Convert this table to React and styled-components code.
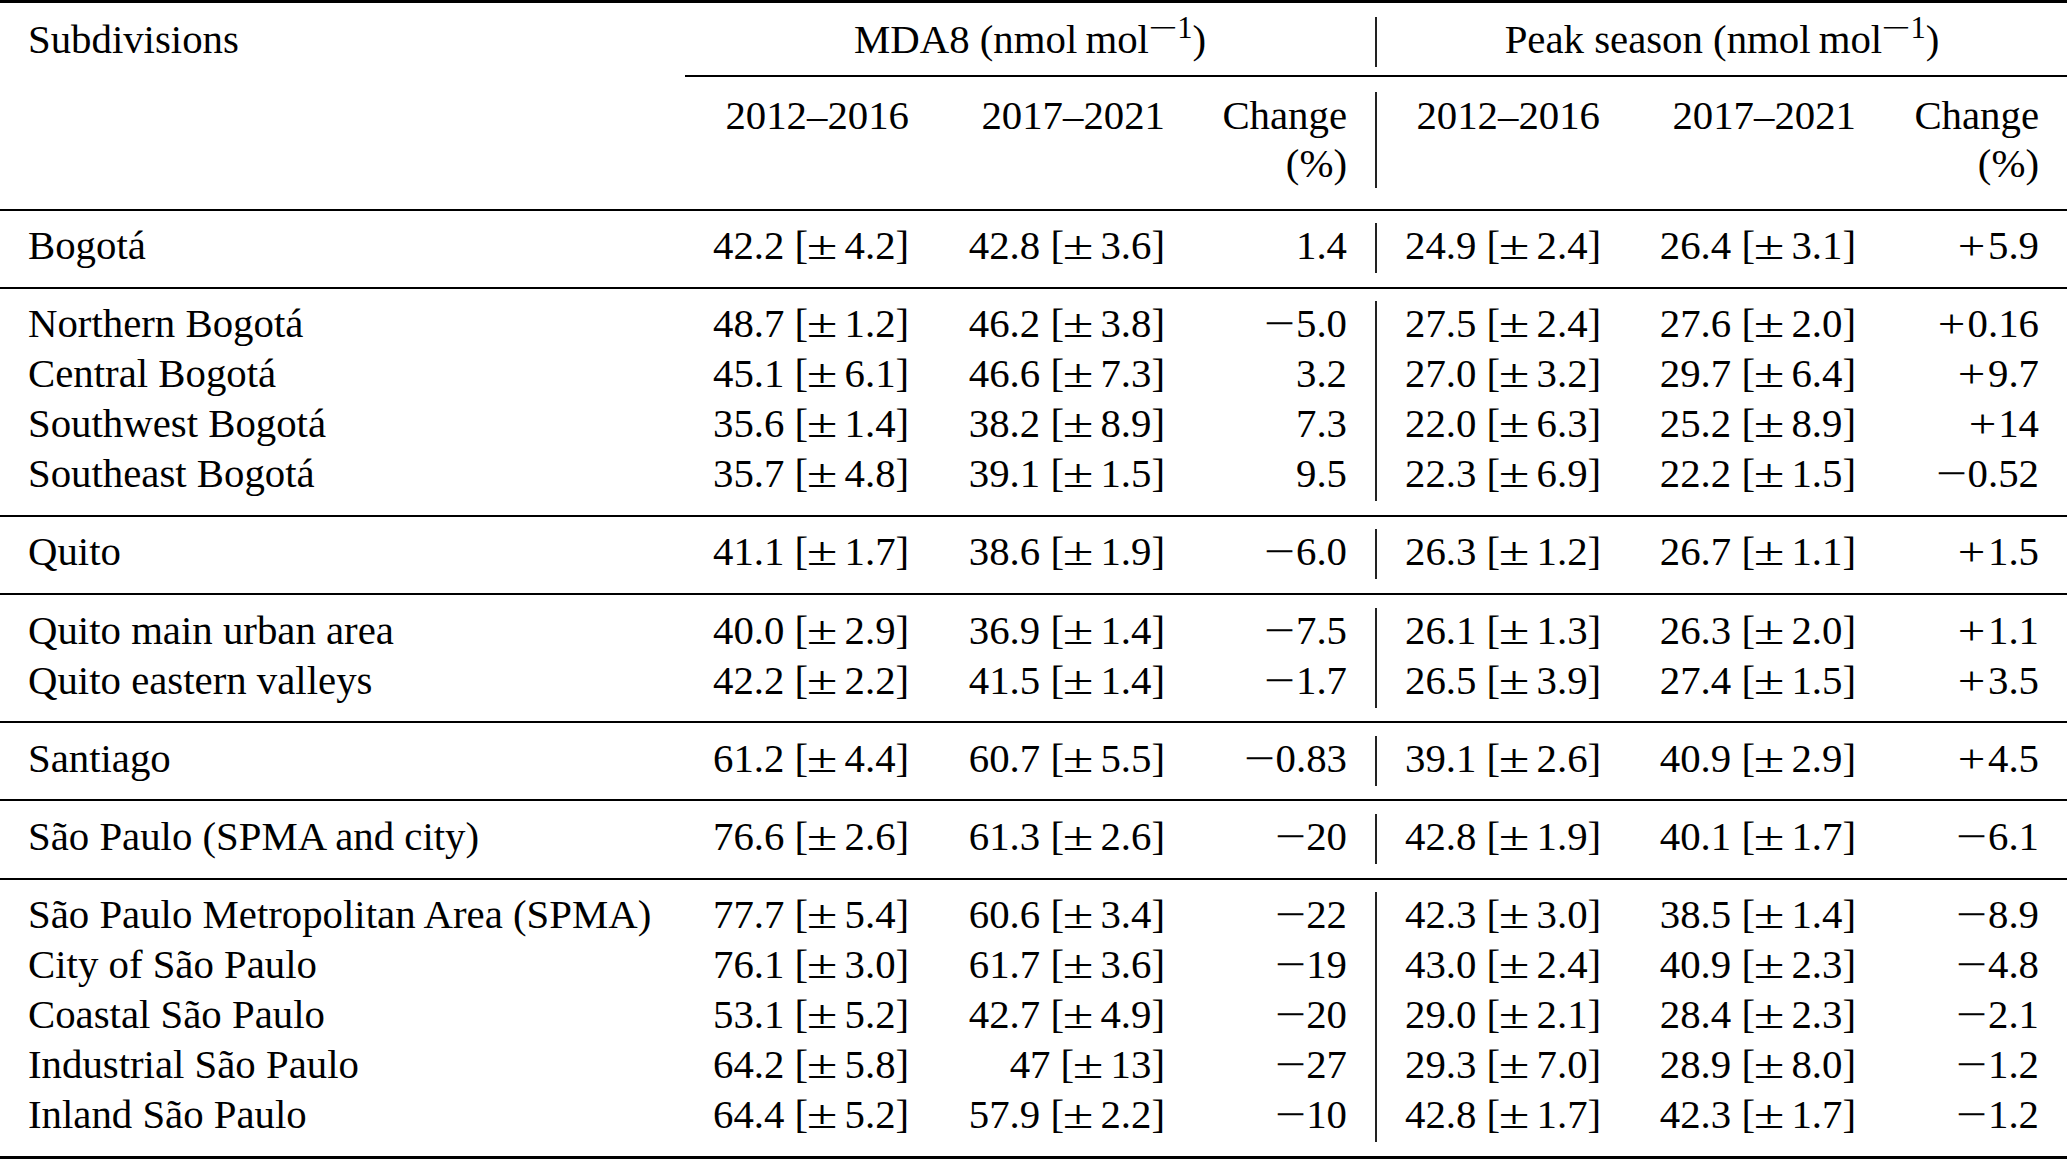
import React from 'react'
import styled, { createGlobalStyle, css } from 'styled-components'

const GlobalStyle = createGlobalStyle`
  html, body {
    margin: 0;
    padding: 0;
    background: #fff;
    overflow: hidden;
  }
  body {
    font-family: "Liberation Serif", "Times New Roman", serif;
    color: #000;
  }
`

const Table = styled.table`
  width: 2067px;
  table-layout: fixed;
  border-collapse: separate;
  border-spacing: 0;
  font-size: 40.8px;
`

const Col = styled.col`
  width: ${(p) => p.$w}px;
`

const RuleCell = styled.td`
  padding: ${(p) => p.$above}px 0 ${(p) => p.$below}px;
  line-height: 0;
`

const Line = styled.div`
  height: ${(p) => p.$weight}px;
  background: #000;
`

const cellBase = css`
  padding: 0 28px 5px;
  line-height: 45px;
  vertical-align: top;
  white-space: nowrap;
  font-weight: normal;
  text-align: ${(p) => p.$align || 'right'};
  border-left: ${(p) => (p.$divider ? '2px solid #222' : 'none')};
`

const Cell = styled.td`
  ${cellBase}
`

const HeadCell = styled.th`
  ${cellBase}
`

const SubHeadCell = styled.th`
  ${cellBase}
  padding-bottom: 0;
  line-height: 48px;
`

const Sup = styled.span`
  font-size: 0.75em;
  line-height: 0;
  vertical-align: 0.49em;
`

// math-style glyphs (± + −) are wider than the text font's own
const MathGlyph = styled.span`
  display: inline-block;
  transform: scaleX(${(p) => p.$sx});
  margin: 0 ${(p) => p.$right}px 0 ${(p) => p.$left}px;
`

const widths = [685, 252, 256, 182, 253, 256, 183]

const groups = [
  [['Bogotá', '42.2', '4.2', '42.8', '3.6', '1.4', '24.9', '2.4', '26.4', '3.1', '+5.9']],
  [
    ['Northern Bogotá', '48.7', '1.2', '46.2', '3.8', '−5.0', '27.5', '2.4', '27.6', '2.0', '+0.16'],
    ['Central Bogotá', '45.1', '6.1', '46.6', '7.3', '3.2', '27.0', '3.2', '29.7', '6.4', '+9.7'],
    ['Southwest Bogotá', '35.6', '1.4', '38.2', '8.9', '7.3', '22.0', '6.3', '25.2', '8.9', '+14'],
    ['Southeast Bogotá', '35.7', '4.8', '39.1', '1.5', '9.5', '22.3', '6.9', '22.2', '1.5', '−0.52']
  ],
  [['Quito', '41.1', '1.7', '38.6', '1.9', '−6.0', '26.3', '1.2', '26.7', '1.1', '+1.5']],
  [
    ['Quito main urban area', '40.0', '2.9', '36.9', '1.4', '−7.5', '26.1', '1.3', '26.3', '2.0', '+1.1'],
    ['Quito eastern valleys', '42.2', '2.2', '41.5', '1.4', '−1.7', '26.5', '3.9', '27.4', '1.5', '+3.5']
  ],
  [['Santiago', '61.2', '4.4', '60.7', '5.5', '−0.83', '39.1', '2.6', '40.9', '2.9', '+4.5']],
  [['São Paulo (SPMA and city)', '76.6', '2.6', '61.3', '2.6', '−20', '42.8', '1.9', '40.1', '1.7', '−6.1']],
  [
    ['São Paulo Metropolitan Area (SPMA)', '77.7', '5.4', '60.6', '3.4', '−22', '42.3', '3.0', '38.5', '1.4', '−8.9'],
    ['City of São Paulo', '76.1', '3.0', '61.7', '3.6', '−19', '43.0', '2.4', '40.9', '2.3', '−4.8'],
    ['Coastal São Paulo', '53.1', '5.2', '42.7', '4.9', '−20', '29.0', '2.1', '28.4', '2.3', '−2.1'],
    ['Industrial São Paulo', '64.2', '5.8', '47', '13', '−27', '29.3', '7.0', '28.9', '8.0', '−1.2'],
    ['Inland São Paulo', '64.4', '5.2', '57.9', '2.2', '−10', '42.8', '1.7', '42.3', '1.7', '−1.2']
  ]
]

const Rule = ({ above, below, weight }) => (
  <tr>
    <RuleCell colSpan={7} $above={above} $below={below}>
      <Line $weight={weight} />
    </RuleCell>
  </tr>
)

const Value = ({ v, e }) => (
  <>
    {v} [<MathGlyph $sx={1.37} $left={3} $right={11}>±</MathGlyph>{e}]
  </>
)

const Signed = ({ n }) => {
  const sign = n[0]
  if (sign === '−') {
    return (
      <>
        <MathGlyph $sx={1.35} $left={4} $right={4.5}>−</MathGlyph>
        {n.slice(1)}
      </>
    )
  }
  if (sign === '+') {
    return (
      <>
        <MathGlyph $sx={1.2} $left={4} $right={4.5}>+</MathGlyph>
        {n.slice(1)}
      </>
    )
  }
  return n
}

const Unit = () => (
  <>
    (nmol{'\u2009'}mol
    <Sup>
      <MathGlyph $sx={1.7} $left={5} $right={6}>−</MathGlyph>1
    </Sup>
    )
  </>
)

const DataRow = ({ row }) => {
  const [name, a, ae, b, be, c, d, de, f, fe, g] = row
  return (
    <tr>
      <Cell $align="left">{name}</Cell>
      <Cell><Value v={a} e={ae} /></Cell>
      <Cell><Value v={b} e={be} /></Cell>
      <Cell><Signed n={c} /></Cell>
      <Cell $divider><Value v={d} e={de} /></Cell>
      <Cell><Value v={f} e={fe} /></Cell>
      <Cell><Signed n={g} /></Cell>
    </tr>
  )
}

const App = () => {
  return (
    <>
      <GlobalStyle />
      <Table>
        <colgroup>
          {widths.map((w, i) => (
            <Col key={i} $w={w} />
          ))}
        </colgroup>
        <thead>
          <Rule above={0} below={14} weight={3} />
          <tr>
            <HeadCell $align="left">Subdivisions</HeadCell>
            <HeadCell colSpan={3} $align="center">
              MDA8 <Unit />
            </HeadCell>
            <HeadCell colSpan={3} $align="center" $divider>
              Peak season <Unit />
            </HeadCell>
          </tr>
          <tr>
            <RuleCell $above={8} $below={15.5} />
            <RuleCell colSpan={6} $above={8} $below={15.5}>
              <Line $weight={1.5} />
            </RuleCell>
          </tr>
          <tr>
            <SubHeadCell $align="left" />
            <SubHeadCell>2012–2016</SubHeadCell>
            <SubHeadCell>2017–2021</SubHeadCell>
            <SubHeadCell>
              Change
              <br />
              (%)
            </SubHeadCell>
            <SubHeadCell $divider>2012–2016</SubHeadCell>
            <SubHeadCell>2017–2021</SubHeadCell>
            <SubHeadCell>
              Change
              <br />
              (%)
            </SubHeadCell>
          </tr>
          <Rule above={20.5} below={12.5} weight={2} />
        </thead>
        {groups.map((group, gi) => (
          <tbody key={gi}>
            {group.map((row) => (
              <DataRow key={row[0]} row={row} />
            ))}
            {gi < groups.length - 1 ? (
              <Rule above={13.7} below={12.5} weight={2} />
            ) : (
              <Rule above={13.7} below={0} weight={3} />
            )}
          </tbody>
        ))}
      </Table>
    </>
  )
}

export default App
